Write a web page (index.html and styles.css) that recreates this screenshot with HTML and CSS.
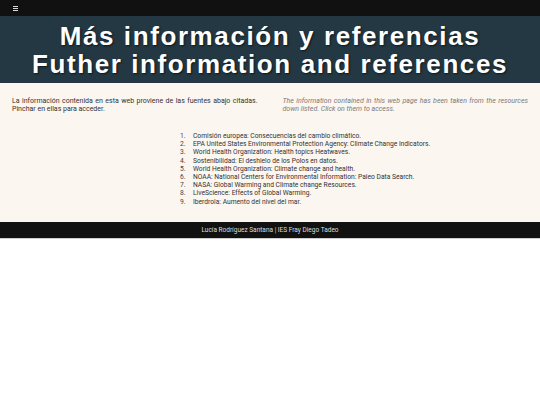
FILE: index.html
```html
<!DOCTYPE html>
<html lang="es">
<head>
<meta charset="utf-8">
<title>Más información y referencias</title>
<link rel="stylesheet" href="styles.css">
</head>
<body>
<nav class="topbar">
  <span class="burger" aria-label="menu"><i></i><i></i><i></i></span>
</nav>
<header class="hero">
  <h1>Más información y referencias<br>Futher information and references</h1>
</header>
<main class="content">
  <div class="intro">
    <p class="es">La información contenida en esta web proviene de las fuentes abajo citadas. Pinchar en ellas para acceder.</p>
    <p class="en">The information contained in this web page has been taken from the resources down listed. Click on them to access.</p>
  </div>
  <ol class="refs">
    <li>Comisión europea: Consecuencias del cambio climático.</li>
    <li>EPA United States Environmental Protection Agency: Climate Change indicators.</li>
    <li>World Health Organization: Health topics Heatwaves.</li>
    <li>Sostenibilidad: El deshielo de los Polos en datos.</li>
    <li>World Health Organization: Climate change and health.</li>
    <li>NOAA: National Centers for Environmental Information: Paleo Data Search.</li>
    <li>NASA: Global Warming and Climate change Resources.</li>
    <li>LiveScience: Effects of Global Warming.</li>
    <li>Iberdrola: Aumento del nivel del mar.</li>
  </ol>
</main>
<footer class="foot">Lucía Rodríguez Santana | IES Fray Diego Tadeo</footer>
</body>
</html>
```
FILE: styles.css
```css
html, body {
  margin: 0;
  padding: 0;
  background: #ffffff;
  font-family: Roboto, "Liberation Sans", sans-serif;
}
.topbar {
  height: 16px;
  background: #111111;
  display: flex;
  align-items: center;
  padding-left: 13px;
}
.burger {
  display: flex;
  flex-direction: column;
  gap: 1px;
  width: 5px;
}
.burger i {
  display: block;
  height: 1px;
  background: #d8d8d8;
}
.hero {
  background: #233843;
  height: 67px;
  display: flex;
  align-items: center;
  justify-content: center;
}
.hero h1 {
  margin: 0;
  color: #ffffff;
  font-family: "Liberation Sans", Arial, sans-serif;
  font-weight: 700;
  font-size: 26px;
  line-height: 28px;
  text-align: center;
  letter-spacing: 1.6px;
  text-shadow: 1px 1px 2px rgba(0,0,0,0.6);
}
.content {
  background: #fbf6f0;
  padding: 15px 12px 0;
  box-sizing: border-box;
  height: 139px;
}
.intro {
  display: grid;
  grid-template-columns: 1fr 1fr;
  column-gap: 25px;
}
.intro p {
  margin: 0;
  font-size: 7px;
  line-height: 7.5px;
  text-align: justify;
}
.intro .es { color: #333333; }
.intro .en { color: #7a7a7a; font-style: italic; }
.refs {
  margin: 19px 0 0 168px;
  padding: 0;
  list-style: none;
  counter-reset: ref;
  font-size: 6.7px;
  line-height: 8.2px;
  color: #333333;
}
.refs li {
  counter-increment: ref;
  display: flex;
}
.refs li::before {
  content: counter(ref) ".";
  width: 13px;
  flex: none;
  color: #444444;
}
.foot {
  background: #111111;
  color: #dddddd;
  font-size: 6.5px;
  height: 16px;
  line-height: 16px;
  text-align: center;
  border-bottom: 1px solid #cfcfcf;
}
```
